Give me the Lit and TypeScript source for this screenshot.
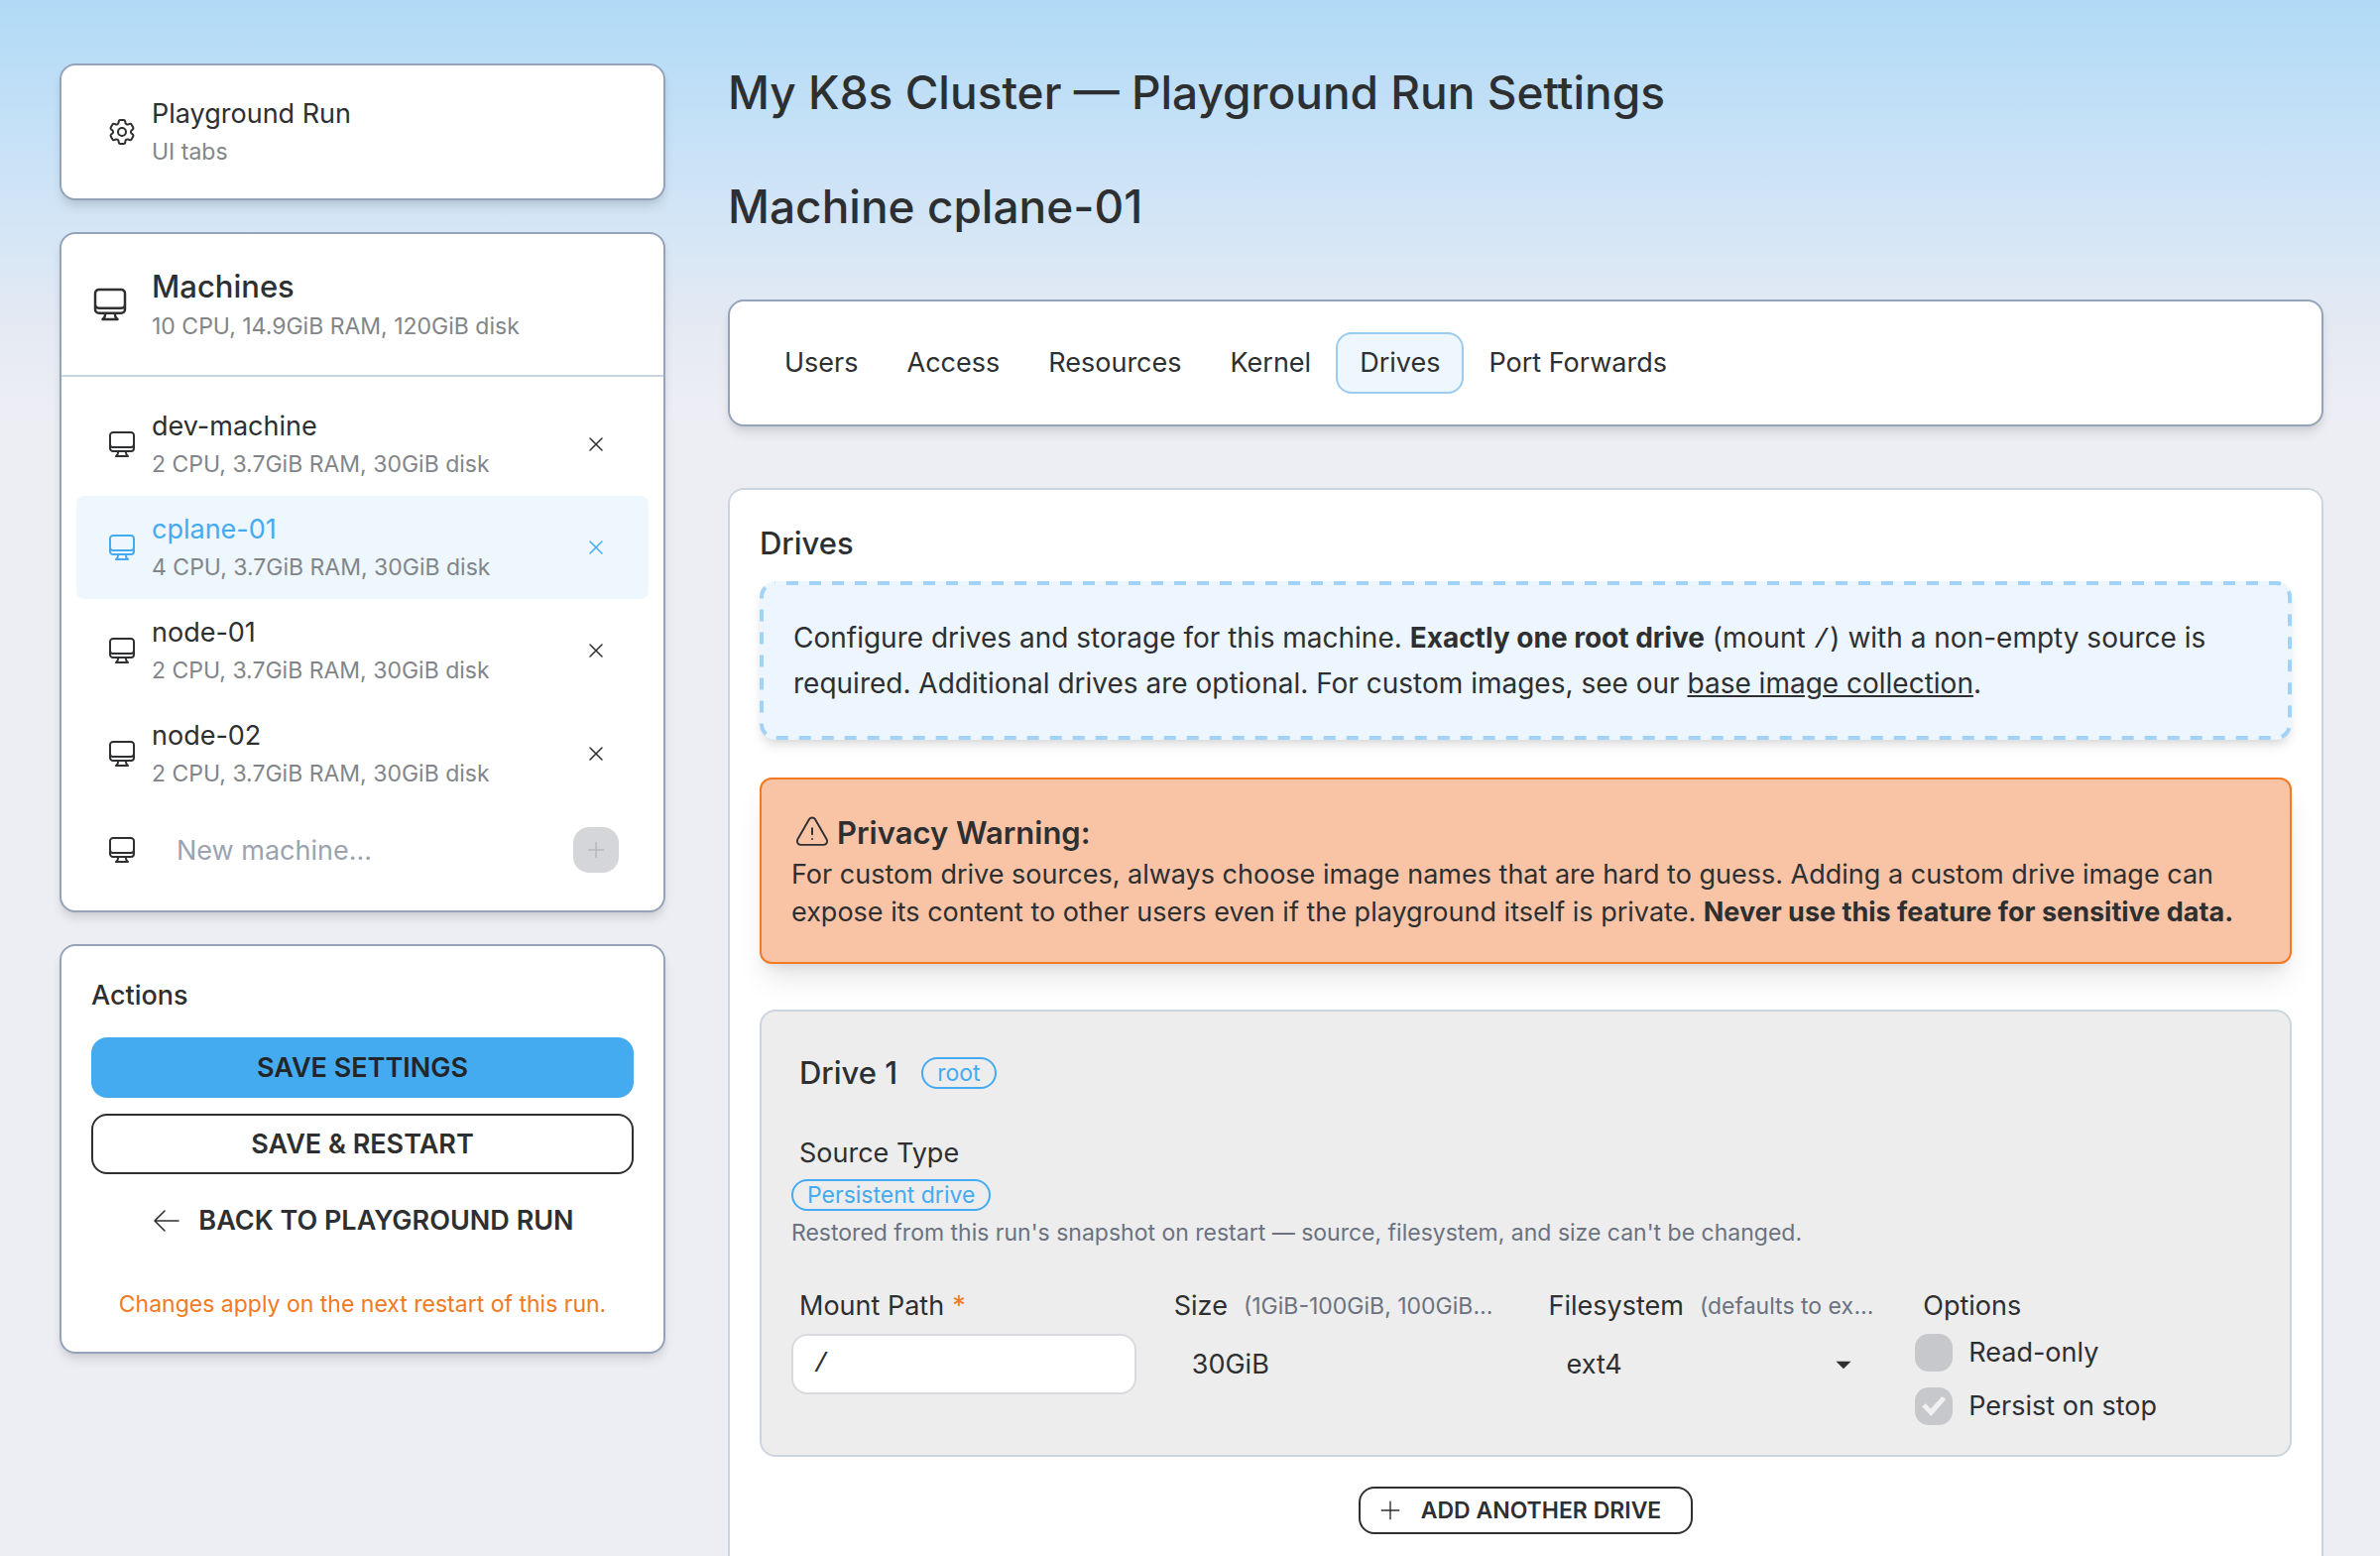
import { LitElement, html, css, svg } from "lit";
import { customElement, property, state } from "lit/decorators.js";
import { classMap } from "lit/directives/class-map.js";

interface Machine {
  name: string;
  specs: string;
}

const MACHINES: Machine[] = [
  { name: "dev-machine", specs: "2 CPU, 3.7GiB RAM, 30GiB disk" },
  { name: "cplane-01", specs: "4 CPU, 3.7GiB RAM, 30GiB disk" },
  { name: "node-01", specs: "2 CPU, 3.7GiB RAM, 30GiB disk" },
  { name: "node-02", specs: "2 CPU, 3.7GiB RAM, 30GiB disk" },
];

const TABS = ["Users", "Access", "Resources", "Kernel", "Drives", "Port Forwards"];

const ICONS = {
  gear: svg`
    <path d="M9.594 3.94c.09-.542.56-.94 1.11-.94h2.593c.55 0 1.02.398 1.11.94l.213 1.281c.063.374.313.686.645.87.074.04.147.083.22.127.325.196.72.257 1.075.124l1.217-.456a1.125 1.125 0 0 1 1.37.49l1.296 2.247a1.125 1.125 0 0 1-.26 1.431l-1.003.827c-.293.241-.438.613-.43.992a7.723 7.723 0 0 1 0 .255c-.008.378.137.75.43.991l1.004.827c.424.35.534.955.26 1.43l-1.298 2.247a1.125 1.125 0 0 1-1.369.491l-1.217-.456c-.355-.133-.75-.072-1.076.124a6.47 6.47 0 0 1-.22.128c-.331.183-.581.495-.644.869l-.213 1.281c-.09.543-.56.94-1.11.94h-2.594c-.55 0-1.019-.398-1.11-.94l-.213-1.281c-.062-.374-.312-.686-.644-.87a6.52 6.52 0 0 1-.22-.127c-.325-.196-.72-.257-1.076-.124l-1.217.456a1.125 1.125 0 0 1-1.369-.49l-1.297-2.247a1.125 1.125 0 0 1 .26-1.431l1.004-.827c.292-.24.437-.613.43-.991a6.932 6.932 0 0 1 0-.255c.007-.38-.138-.751-.43-.992l-1.004-.827a1.125 1.125 0 0 1-.26-1.43l1.297-2.247a1.125 1.125 0 0 1 1.37-.491l1.216.456c.356.133.751.072 1.076-.124.072-.044.146-.086.22-.128.332-.183.582-.495.644-.869l.214-1.28Z"/>
    <circle cx="12" cy="12" r="3"/>`,
  monitor: svg`<path d="M9 17.25v1.007a3 3 0 0 1-.879 2.122L7.5 21h9l-.621-.621A3 3 0 0 1 15 18.257V17.25m6-12V15a2.25 2.25 0 0 1-2.25 2.25H5.25A2.25 2.25 0 0 1 3 15V5.25m18 0A2.25 2.25 0 0 0 18.75 3H5.25A2.25 2.25 0 0 0 3 5.25m18 0V12a2.25 2.25 0 0 1-2.25 2.25H5.25A2.25 2.25 0 0 1 3 12V5.25"/>`,
  close: svg`<path d="M6 18 18 6M6 6l12 12"/>`,
  plus: svg`<path d="M12 4.5v15m7.5-7.5h-15"/>`,
  back: svg`<path d="M10.5 19.5 3 12m0 0 7.5-7.5M3 12h18"/>`,
  warning: svg`<path d="M12 9v3.75m-9.303 3.376c-.866 1.5.217 3.374 1.948 3.374h14.71c1.73 0 2.813-1.874 1.948-3.374L13.949 3.378c-.866-1.5-3.032-1.5-3.898 0L2.697 16.126ZM12 15.75h.007v.008H12v-.008Z"/>`,
  caret: svg`<path d="M3 8h18l-9 9Z" fill="currentColor" stroke="none"/>`,
};

@customElement("ui-icon")
export class UiIcon extends LitElement {
  @property() name: keyof typeof ICONS = "monitor";
  @property({ type: Number }) weight = 1.5;

  static styles = css`
    :host {
      display: block;
      flex: none;
      width: 32px;
      height: 32px;
    }
    .glyph {
      display: block;
      width: 100%;
      height: 100%;
      fill: none;
      stroke: currentColor;
      stroke-linecap: round;
      stroke-linejoin: round;
    }
  `;

  render() {
    return html`<svg class="glyph" viewBox="0 0 24 24" stroke-width=${this.weight} aria-hidden="true">${ICONS[this.name]}</svg>`;
  }
}

@customElement("app-root")
export class AppRoot extends LitElement {
  @state() private machine = "cplane-01";
  @state() private tab = "Drives";

  static styles = css`
    :host {
      --ink: #2d2f31;
      --muted: #828689;
      --hint: #6b7280;
      --blue: #45abf0;
      --tint: #eef6fe;
      --edge: #94a3b8;
      --edge-soft: #cbd5e1;
      --orange: #f17a22;
      --shadow: 0 8px 12px -2px rgb(0 0 0 / 0.1), 0 4px 8px -4px rgb(0 0 0 / 0.1);
      display: block;
      box-sizing: border-box;
      min-height: 100vh;
      max-height: 100vh;
      overflow: hidden;
      padding: 64px 57px 0 60px;
      background: linear-gradient(#b1daf6 0, #c8e2f7 150px, #d6e6f5 240px, #e6eaf3 340px, #edeef4 420px) #edeef4;
      color: var(--ink);
      font: 400 27px/40px Inter, "Liberation Sans", sans-serif;
    }
    *, *::before {
      box-sizing: border-box;
    }
    h1, h2, h3, h4, p, ul {
      margin: 0;
      padding: 0;
    }
    h1, h2, h3, h4 {
      font-weight: 500;
    }
    button, input, select {
      margin: 0;
      padding: 0;
      border: 0;
      background: none;
      color: inherit;
      font: inherit;
    }
    a {
      color: inherit;
      text-decoration: none;
    }
    .page {
      display: grid;
      grid-template-columns: 611px minmax(0, 1fr);
      gap: 63px;
      align-items: start;
    }
    .side {
      display: grid;
      grid-template-columns: minmax(0, 1fr);
      gap: 32px;
    }
    .card {
      border: 2px solid var(--edge);
      border-radius: 16px;
      background: #fff;
      box-shadow: var(--shadow);
    }
    .small {
      display: block;
      color: var(--muted);
      font-size: 23px;
      line-height: 36px;
    }
    .name {
      display: block;
    }
    .run {
      display: flex;
      align-items: center;
      gap: 14px;
      padding: 29px 45px;
    }
    .head {
      display: flex;
      align-items: center;
      gap: 22px;
      padding: 31px 29px;
      border-bottom: 2px solid var(--edge-soft);
    }
    .head-icon {
      width: 40px;
      height: 40px;
    }
    .head-title {
      font-size: 31px;
      line-height: 44px;
    }
    .list {
      padding: 16px 15px;
      list-style: none;
    }
    .row {
      display: flex;
      align-items: center;
      gap: 14px;
      min-height: 104px;
      padding: 0 30px;
      border-radius: 8px;
    }
    .row.active {
      background: var(--tint);
      color: var(--blue);
    }
    .pick {
      display: flex;
      flex: 1;
      align-items: center;
      gap: 14px;
      text-align: left;
    }
    .square {
      display: grid;
      place-items: center;
      width: 46px;
      height: 46px;
      border-radius: 16px;
    }
    .square-icon {
      width: 24px;
      height: 24px;
    }
    .new {
      min-height: 90px;
    }
    .new-name {
      flex: 1;
      min-width: 0;
      height: 56px;
      padding: 0 25px;
    }
    .new-name::placeholder {
      color: #9ca3af;
      opacity: 1;
    }
    .add {
      background: #d5d6d9;
      color: #b6b8bb;
    }
    .actions {
      display: grid;
      gap: 16px;
      padding: 30px;
    }
    .block-title {
      margin-bottom: 6px;
      font-size: 27px;
    }
    .btn {
      display: flex;
      align-items: center;
      justify-content: center;
      gap: 16px;
      height: 61px;
      border: 2px solid transparent;
      border-radius: 16px;
      font-weight: 600;
    }
    .primary {
      background: var(--blue);
      color: #232629;
    }
    .outline {
      border-color: var(--ink);
    }
    .note {
      padding: 20px 0 0;
      color: var(--orange);
      font-size: 23px;
      line-height: 36px;
      text-align: center;
    }
    .title {
      font-size: 46px;
      line-height: 58px;
    }
    .subtitle {
      margin-top: 56px;
      font-size: 46px;
      line-height: 60px;
    }
    .tabs {
      display: flex;
      gap: 1px;
      margin-top: 64px;
      padding: 31px;
    }
    .tab {
      height: 62px;
      padding: 0 22px;
      border: 2px solid transparent;
      border-radius: 16px;
    }
    .tab.active {
      border-color: #9bcbee;
      background: var(--tint);
    }
    .panel {
      margin-top: 62px;
      padding: 32px 30px 40px;
      border-color: var(--edge-soft);
      box-shadow: none;
    }
    .panel-title {
      margin-bottom: 16px;
      font-size: 31px;
      line-height: 44px;
    }
    .info {
      position: relative;
      padding: 34px;
      border-radius: 16px;
      background: #edf6fe;
      box-shadow: var(--shadow);
    }
    .dashes {
      position: absolute;
      inset: 0;
      width: 100%;
      height: 100%;
      pointer-events: none;
    }
    .dash-line {
      width: calc(100% - 4px);
      height: calc(100% - 4px);
      fill: none;
      stroke: #a2d3f7;
      stroke-width: 4;
      stroke-dasharray: 12 11;
      stroke-dashoffset: 12;
    }
    .info-text {
      font-size: 28px;
      line-height: 46px;
    }
    strong {
      font-weight: 700;
    }
    .slash {
      font-family: "Liberation Mono", monospace;
      line-height: 1;
    }
    .link {
      text-decoration: underline;
    }
    .warn {
      margin-top: 38px;
      padding: 32px 30px 31px;
      border: 2px solid var(--orange);
      border-radius: 12px;
      background: #f9c4a5;
      box-shadow: 0 20px 30px -6px rgb(0 0 0 / 0.1), 0 8px 12px -6px rgb(0 0 0 / 0.1);
      line-height: 38px;
    }
    .warn-title {
      display: flex;
      align-items: center;
      gap: 6px;
      padding: 2px 2px 3px;
      font-size: 31px;
      font-weight: 600;
      line-height: 40px;
    }
    .warn-icon {
      width: 38px;
      height: 38px;
    }
    .drive {
      margin-top: 46px;
      padding: 30px;
      border: 2px solid var(--edge-soft);
      border-radius: 16px;
      background: #ededed;
    }
    .drive-head {
      display: flex;
      align-items: center;
      gap: 24px;
      padding: 10px 8px;
    }
    .drive-title {
      font-size: 31px;
      line-height: 44px;
    }
    .badge {
      display: inline-flex;
      align-items: center;
      height: 32px;
      padding: 0 14px;
      border: 2px solid var(--blue);
      border-radius: 16px;
      color: var(--blue);
      font-size: 23px;
      line-height: 28px;
    }
    .source {
      display: grid;
      justify-items: start;
      row-gap: 2px;
      margin-top: 25px;
    }
    .label {
      display: flex;
      align-items: center;
      gap: 16px;
      min-width: 0;
      padding: 4px 8px;
      white-space: nowrap;
    }
    .label.tight {
      gap: 8px;
    }
    .hint {
      overflow: hidden;
      color: var(--hint);
      font-size: 23px;
      text-overflow: ellipsis;
    }
    .help {
      margin-top: 2px;
      color: var(--hint);
      font-size: 23px;
      line-height: 36px;
    }
    .star {
      color: var(--orange);
    }
    .fields {
      display: grid;
      grid-template-columns: repeat(4, minmax(0, 1fr));
      gap: 30px;
      margin-top: 32px;
    }
    .field {
      min-width: 0;
    }
    .box {
      width: 100%;
      height: 61px;
      margin-top: 4px;
      padding: 0 24px;
      border: 2px solid transparent;
      border-radius: 16px;
      opacity: 1;
      color: var(--ink);
    }
    .box.filled {
      padding: 0 20px;
      border-color: #d9dade;
      background: #fff;
      font-family: "Liberation Mono", monospace;
    }
    .select {
      display: grid;
      align-items: center;
      justify-items: end;
    }
    .select > * {
      grid-area: 1 / 1;
    }
    .select .box {
      appearance: none;
    }
    .caret {
      width: 20px;
      height: 20px;
      margin: 4px 32px 0 0;
      pointer-events: none;
    }
    .check {
      display: flex;
      align-items: center;
      gap: 16px;
      height: 38px;
      margin: 4px 0 16px;
    }
    .check:last-child {
      margin-bottom: 0;
    }
    .tick {
      appearance: none;
      display: grid;
      place-items: center;
      width: 38px;
      height: 38px;
      border-radius: 14px;
      background: #c7c8cc;
    }
    .tick:checked::before {
      content: "";
      width: 24px;
      height: 20px;
      background: #f0f0f1;
      clip-path: polygon(0 52%, 14% 36%, 36% 62%, 84% 0, 100% 15%, 38% 100%);
    }
    .more {
      display: flex;
      justify-content: center;
      margin-top: 30px;
    }
    .btn.compact {
      gap: 17px;
      height: 48px;
      padding: 0 30px 0 16px;
      font-size: 23px;
    }
    .compact-icon {
      width: 28px;
      height: 28px;
    }
  `;

  private renderMachine(m: Machine) {
    return html`
      <li class=${classMap({ row: true, active: m.name === this.machine })}>
        <button class="pick" @click=${() => (this.machine = m.name)}>
          <ui-icon name="monitor"></ui-icon>
          <span><span class="name">${m.name}</span><span class="small">${m.specs}</span></span>
        </button>
        <button class="square" aria-label="Remove ${m.name}">
          <ui-icon class="square-icon" name="close"></ui-icon>
        </button>
      </li>
    `;
  }

  private renderSidebar() {
    return html`
      <aside class="side">
        <a class="card run" href="#run">
          <ui-icon name="gear"></ui-icon>
          <span><span class="name">Playground Run</span><span class="small">UI tabs</span></span>
        </a>
        <nav class="card" aria-label="Machines">
          <header class="head">
            <ui-icon class="head-icon" name="monitor"></ui-icon>
            <div>
              <h3 class="head-title">Machines</h3>
              <p class="small">10 CPU, 14.9GiB RAM, 120GiB disk</p>
            </div>
          </header>
          <ul class="list">
            ${MACHINES.map((m) => this.renderMachine(m))}
            <li class="row new">
              <ui-icon name="monitor"></ui-icon>
              <input class="new-name" type="text" placeholder="New machine..." aria-label="New machine name" />
              <button class="square add" aria-label="Add machine" disabled>
                <ui-icon class="square-icon" name="plus"></ui-icon>
              </button>
            </li>
          </ul>
        </nav>
        <section class="card actions">
          <h4 class="block-title">Actions</h4>
          <button class="btn primary">SAVE SETTINGS</button>
          <button class="btn outline">SAVE &amp; RESTART</button>
          <a class="btn" href="#run"><ui-icon name="back" weight="1.2"></ui-icon>BACK TO PLAYGROUND RUN</a>
          <p class="note">Changes apply on the next restart of this run.</p>
        </section>
      </aside>
    `;
  }

  private renderDrive() {
    return html`
      <section class="drive">
        <header class="drive-head">
          <h4 class="drive-title">Drive 1</h4>
          <span class="badge">root</span>
        </header>
        <div class="source">
          <span class="label">Source Type</span>
          <span class="badge">Persistent drive</span>
          <p class="help">Restored from this run's snapshot on restart — source, filesystem, and size can't be changed.</p>
        </div>
        <div class="fields">
          <div class="field">
            <label class="label tight" for="mount">Mount Path <span class="star">*</span></label>
            <input class="box filled" id="mount" type="text" .value=${"/"} />
          </div>
          <div class="field">
            <label class="label" for="size">Size <span class="hint">(1GiB-100GiB, 100GiB-per-machine)</span></label>
            <input class="box" id="size" type="text" .value=${"30GiB"} disabled />
          </div>
          <div class="field">
            <label class="label" for="fs">Filesystem <span class="hint">(defaults to ext4)</span></label>
            <div class="select">
              <select class="box" id="fs" disabled><option>ext4</option></select>
              <ui-icon class="caret" name="caret"></ui-icon>
            </div>
          </div>
          <div class="field" role="group" aria-labelledby="options">
            <span class="label" id="options">Options</span>
            <label class="check"><input class="tick" type="checkbox" disabled />Read-only</label>
            <label class="check"><input class="tick" type="checkbox" checked disabled />Persist on stop</label>
          </div>
        </div>
      </section>
    `;
  }

  render() {
    return html`
      <div class="page">
        ${this.renderSidebar()}
        <main>
          <h1 class="title">My K8s Cluster — Playground Run Settings</h1>
          <h2 class="subtitle">Machine ${this.machine}</h2>
          <nav class="card tabs" aria-label="Machine settings">
            ${TABS.map(
              (t) => html`<button class=${classMap({ tab: true, active: t === this.tab })} @click=${() => (this.tab = t)}>${t}</button>`
            )}
          </nav>
          <section class="card panel">
            <h3 class="panel-title">Drives</h3>
            <div class="info">
              <svg class="dashes" aria-hidden="true"><rect class="dash-line" x="2" y="2" rx="14" /></svg>
              <p class="info-text">
                Configure drives and storage for this machine. <strong>Exactly one root drive</strong> (mount
                <code class="slash">/</code>) with a non-empty source is required. Additional drives are optional. For
                custom images, see our <a class="link" href="#images">base image collection</a>.
              </p>
            </div>
            <div class="warn" role="alert">
              <h4 class="warn-title"><ui-icon class="warn-icon" name="warning" weight="1.2"></ui-icon>Privacy Warning:</h4>
              <p>
                For custom drive sources, always choose image names that are hard to guess. Adding a custom drive image can
                expose its content to other users even if the playground itself is private.
                <strong>Never use this feature for sensitive data.</strong>
              </p>
            </div>
            ${this.renderDrive()}
            <div class="more">
              <button class="btn outline compact">
                <ui-icon class="compact-icon" name="plus" weight="1.2"></ui-icon>ADD ANOTHER DRIVE
              </button>
            </div>
          </section>
        </main>
      </div>
    `;
  }
}
